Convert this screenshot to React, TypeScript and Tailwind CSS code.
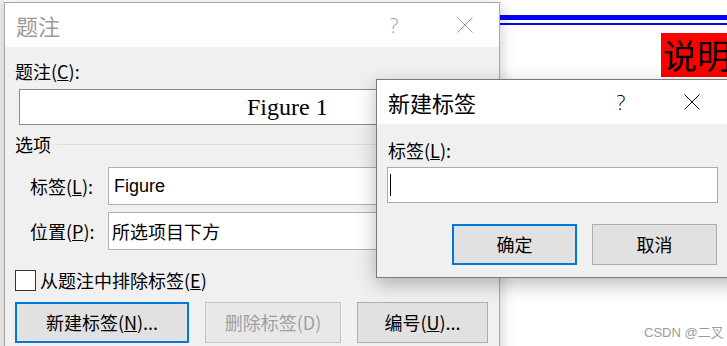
import React from "react";

const CJK = '"Noto Sans CJK SC", "Noto Sans", sans-serif';

const CloseIcon = ({ color }: { color: string }) => (
  <svg width="16" height="16" viewBox="0 0 16 16" fill="none">
    <path d="M0.5 0.5 L15.5 15.5 M15.5 0.5 L0.5 15.5" stroke={color} strokeWidth="1" />
  </svg>
);

const TitleBar = ({
  title,
  active,
  helpWidth,
  gap,
  right,
}: {
  title: string;
  active: boolean;
  helpWidth: number;
  gap: number;
  right: number;
}) => (
  <div className="flex h-[44px] items-center bg-white pl-[11px]">
    <div
      className={`flex-1 text-[22px] leading-none ${active ? "text-black" : "text-[#9a9a9a]"}`}
      style={{ fontFamily: CJK }}
    >
      {title}
    </div>
    <div className="flex items-center" style={{ paddingRight: right }}>
      <span
        className={`text-center text-[21px] font-light leading-none ${active ? "text-black" : "text-[#a0a0a0]"}`}
        style={{ width: helpWidth, fontFamily: '"Open Sans", sans-serif' }}
      >
        ?
      </span>
      <span style={{ width: gap }} />
      <CloseIcon color={active ? "#111" : "#999"} />
    </div>
  </div>
);

const Button = ({
  children,
  width,
  primary,
  disabled,
}: {
  children: React.ReactNode;
  width: number;
  primary?: boolean;
  disabled?: boolean;
}) => (
  <div
    className={`flex h-[41px] items-center justify-center text-[18px] ${
      primary
        ? "border-2 border-[#0078d7] bg-[#e1e1e1] text-black"
        : disabled
          ? "border border-[#c4c4c4] bg-[#e8e8e8] text-[#a0a0a0]"
          : "border border-[#adadad] bg-[#e1e1e1] text-black"
    }`}
    style={{ width, fontFamily: CJK }}
  >
    {children}
  </div>
);

export default function App() {
  return (
    <div
      className="relative h-[346px] w-[727px] overflow-hidden bg-white"
      style={{ fontFamily: CJK }}
    >
      {/* document behind the dialogs */}
      <div className="absolute left-0 top-0 h-full w-[4px] bg-[#ececec]" />
      <div className="absolute left-[499px] top-[15px] h-[5px] w-[240px] bg-[#0000ff]" />
      <div className="absolute left-[499px] top-[23px] h-[2px] w-[240px] bg-[#0000ff]" />
      <div className="absolute left-[661px] top-[33px] flex h-[44px] w-[80px] items-center bg-[#ff0000] pl-[2px] text-[34px] leading-none text-black">
        说明
      </div>
      <div
        className="absolute left-[644px] top-[323px] text-[13px] text-[#9b9b9b]"
        style={{ fontFamily: '"Liberation Sans", "Noto Sans CJK SC", sans-serif' }}
      >
        CSDN @二叉
      </div>

      {/* 题注 dialog */}
      <div className="absolute left-[4px] top-[2px] h-[380px] w-[496px] border border-[#a8a8a8] bg-[#f0f0f0] shadow-[2px_2px_12px_rgba(0,0,0,0.18)]">
        <TitleBar title="题注" active={false} helpWidth={30} gap={48} right={26} />
        <div className="flex flex-col px-[10px] text-[18px] text-black">
          <div className="mt-[12px] h-[24px] leading-[24px]">
            题注(<u>C</u>):
          </div>
          <div
            className="ml-[4px] mt-[6px] flex h-[36px] w-[466px] items-center border border-[#8a8a8a] bg-white pl-[227px] text-[24px]"
            style={{ fontFamily: '"Liberation Serif", serif' }}
          >
            Figure 1
          </div>
          <div className="mt-[7px] flex h-[24px] items-center">
            <span className="leading-[24px]">选项</span>
            <span className="ml-[6px] h-px flex-1 bg-[#dcdcdc]" />
          </div>
          <div className="mt-[11px] flex items-center">
            <span className="w-[93px] pl-[15px]">
              标签(<u>L</u>):
            </span>
            <div
              className="flex h-[38px] flex-1 items-center border border-[#b0b0b0] bg-white pl-[5px]"
              style={{ fontFamily: '"Liberation Sans", sans-serif' }}
            >
              Figure
            </div>
          </div>
          <div className="mt-[7px] flex items-center">
            <span className="w-[93px] pl-[15px]">
              位置(<u>P</u>):
            </span>
            <div className="flex h-[38px] flex-1 items-center border border-[#b0b0b0] bg-white pl-[3px]">
              所选项目下方
            </div>
          </div>
          <div className="mt-[18px] flex h-[24px] items-center">
            <span className="h-[21px] w-[21px] border border-[#333333] bg-white" />
            <span className="ml-[4px]">
              从题注中排除标签(<u>E</u>)
            </span>
          </div>
          <div className="mt-[10px] flex gap-[16px]">
            <Button width={174} primary>
              新建标签(<u>N</u>)...
            </Button>
            <Button width={136} disabled>
              删除标签(D)
            </Button>
            <Button width={131}>
              编号(<u>U</u>)...
            </Button>
          </div>
        </div>
      </div>

      {/* 新建标签 dialog */}
      <div className="absolute left-[376px] top-[79px] h-[199px] w-[380px] border border-[#7a7a7a] bg-[#f0f0f0] shadow-[0_6px_18px_rgba(0,0,0,0.28)]">
        <TitleBar title="新建标签" active helpWidth={30} gap={48} right={55} />
        <div className="flex flex-col pl-[10px] text-[18px] text-black">
          <div className="ml-[1px] mt-[14px] h-[24px] leading-[24px]">
            标签(<u>L</u>):
          </div>
          <div className="mt-[5px] flex h-[36px] w-[331px] items-center border border-[#ababab] bg-white pl-[2px]">
            <span className="h-[22px] w-px bg-black" />
          </div>
          <div className="ml-[65px] mt-[21px] flex gap-[15px]">
            <Button width={125} primary>
              确定
            </Button>
            <Button width={125}>取消</Button>
          </div>
        </div>
      </div>
    </div>
  );
}
